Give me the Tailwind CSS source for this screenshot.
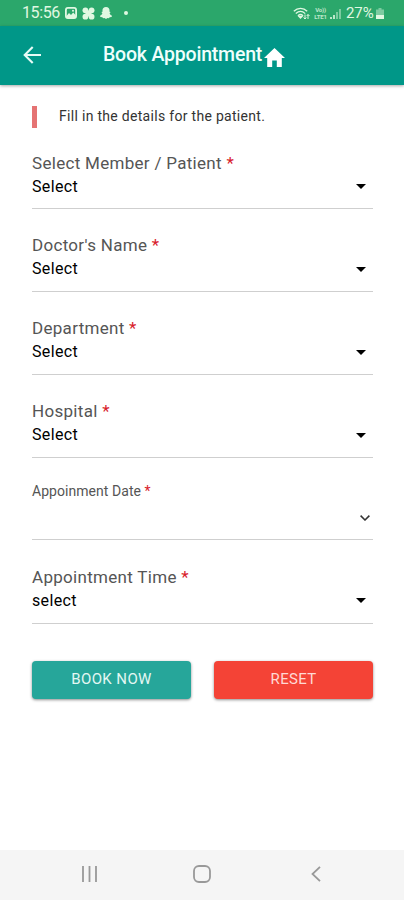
<!DOCTYPE html>
<html lang="en">
  <head>
    <meta charset="UTF-8" />
    <meta name="viewport" content="width=device-width, initial-scale=1.0" />
    <title>Book Appointment</title>
    <script src="https://cdn.jsdelivr.net/npm/@tailwindcss/browser@4"></script>
  </head>
  <body class="bg-white font-[Roboto,sans-serif] text-black">
    <div class="flex flex-col w-[404px] h-[900px] overflow-hidden">
      <!-- Status bar -->
      <div class="h-[26px] shrink-0 bg-[#2ba76b] text-[#e0f8e2] flex items-center justify-between pl-[22px] pr-[20px]">
        <div class="flex items-center">
          <span class="w-[43px] text-[16px] leading-none whitespace-nowrap tracking-[-0.4px]">15:56</span>
          <svg class="w-[12px] h-[12px]" viewBox="0 0 12 12">
            <rect x="0.9" y="0.9" width="10.2" height="10.2" rx="2" fill="none" stroke="currentColor" stroke-width="1.8" />
            <path d="M1 9.5 4 6l2 2 2.2-2.6L11 8.5V11H1z" fill="currentColor" />
            <circle cx="8" cy="3.7" r="1" fill="currentColor" />
          </svg>
          <svg class="w-[13px] h-[13px] ml-[5px]" viewBox="0 0 13 13" fill="currentColor">
            <circle cx="3.4" cy="3.3" r="2.9" />
            <circle cx="9.6" cy="3.3" r="2.9" />
            <circle cx="3.4" cy="9.7" r="2.9" />
            <circle cx="9.6" cy="9.7" r="2.9" />
            <rect x="3.5" y="3.5" width="6" height="6" />
          </svg>
          <svg class="w-[12px] h-[12px] ml-[5px]" viewBox="0 0 12 12" fill="currentColor">
            <path d="M6 0C3.7 0 2.5 1.5 2.5 3.1v1.7l-1.200.3 1.100 1.200C2 7.600 1.300 8.300 0 8.800l.4 1.200 2 .3.6.9 1.500-.1L6 12l1.500-.9 1.500.1.6-.9 2-.3.4-1.200c-1.300-.5-2-1.200-2.400-2.500l1.100-1.200-1.200-.3V3.100C9.500 1.500 8.300 0 6 0z" />
          </svg>
          <span class="w-[4px] h-[4px] ml-[12px] rounded-full bg-current"></span>
        </div>
        <div class="flex items-center">
          <svg class="w-[17px] h-[13px]" viewBox="0 0 17 13" fill="none" stroke="currentColor" stroke-width="1.3">
            <path d="M.8 4.200c4-3.800 9.500-3.800 13.400 0M2.800 6.600c3-2.800 6.500-2.800 9.400 0M5 8.800c1.500-1.500 3.500-1.500 5 0" />
            <path d="M6 9.500h3L7.500 11z" />
            <path d="M12 7.500v4.500M10.500 10.500 12 12l1.300-1.500M15 12V7.500M13.700 9 15 7.500 16.500 9" stroke-width="1" />
          </svg>
          <span class="ml-[3px] w-[15px] flex flex-col items-center text-[6px] leading-[7px] font-bold opacity-80 tracking-[-0.2px]">
            <span>Vo))</span>
            <span>LTE1</span>
          </span>
          <svg class="w-[11px] h-[11px] ml-[2px]" viewBox="0 0 11 11" fill="currentColor">
            <path d="M0 9h2v2H0zM3 7h2v4H3z" opacity=".8" />
            <path d="M6 4h2v7H6zM9 1h2v10H9z" opacity=".45" />
          </svg>
          <span class="ml-[5px] w-[29px] text-[15px] leading-none whitespace-nowrap tracking-[-0.1px]">27%</span>
          <svg class="w-[8px] h-[11px] ml-px mt-px" viewBox="0 0 8 11" fill="currentColor">
            <path d="M2.500 0h3v1.500H8V11H0V1.500h2.500z" opacity=".45" />
            <path d="M0 7h8v4H0z" />
          </svg>
        </div>
      </div>

      <!-- App bar -->
      <header class="relative z-10 h-[59px] shrink-0 bg-[#009788] text-white flex items-center shadow-[0_1px_3px_rgba(0,0,0,0.35)]">
        <svg class="w-[18px] h-[18px] ml-[23px] mb-px" viewBox="0 0 18 18" fill="none" stroke="#e6fbf6" stroke-width="2.1">
          <path d="M9.700 1 1.700 9l8 8M1.700 9H18" />
        </svg>
        <h1 class="ml-[62px] mb-[2px] w-[160px] text-[19.5px] leading-none font-medium whitespace-nowrap tracking-[-0.2px] text-[#effffc]">Book Appointment</h1>
        <svg class="w-[21px] h-[19px] ml-px mt-[3px]" viewBox="0 0 21 19" fill="currentColor">
          <path d="M10.500 0 0 10h3.200v9h5v-6.500h4.600V19h5v-9H21z" />
        </svg>
      </header>

      <!-- Form -->
      <main class="grow px-[32px] pt-[21px]">
        <div class="h-[22px] border-l-[5px] border-[#e57373] pl-[22px] text-[14px] leading-[21px] text-[#333] whitespace-nowrap">
          <p class="tracking-[0.3px]">Fill in the details for the patient.</p>
        </div>

        <form class="mt-[-2px] w-[341px]">
          <div class="h-[83px] border-b border-[#cfcfcf] pt-[25px]">
            <label class="block text-[17px] leading-[24px] tracking-[0.3px] text-[#555]">Select Member / Patient <span class="text-[#d8202a]">*</span></label>
            <div class="flex items-center justify-between pr-[7px] text-[16px] leading-[23px] tracking-[0.35px]">
              Select
              <svg class="w-[10px] h-[5px]" viewBox="0 0 10 5"><path d="M0 0h10L5 5z" /></svg>
            </div>
          </div>
          <div class="h-[83px] border-b border-[#cfcfcf] pt-[24px]">
            <label class="block text-[17px] leading-[24px] tracking-[0.3px] text-[#555]">Doctor's Name <span class="text-[#d8202a]">*</span></label>
            <div class="flex items-center justify-between pr-[7px] text-[16px] leading-[24px] tracking-[0.35px]">
              Select
              <svg class="w-[10px] h-[5px]" viewBox="0 0 10 5"><path d="M0 0h10L5 5z" /></svg>
            </div>
          </div>
          <div class="h-[83px] border-b border-[#cfcfcf] pt-[24px]">
            <label class="block text-[17px] leading-[24px] tracking-[0.3px] text-[#555]">Department <span class="text-[#d8202a]">*</span></label>
            <div class="flex items-center justify-between pr-[7px] text-[16px] leading-[24px] tracking-[0.35px]">
              Select
              <svg class="w-[10px] h-[5px]" viewBox="0 0 10 5"><path d="M0 0h10L5 5z" /></svg>
            </div>
          </div>
          <div class="h-[83px] border-b border-[#cfcfcf] pt-[24px]">
            <label class="block text-[17px] leading-[24px] tracking-[0.3px] text-[#555]">Hospital <span class="text-[#d8202a]">*</span></label>
            <div class="flex items-center justify-between pr-[7px] text-[16px] leading-[24px] tracking-[0.35px]">
              Select
              <svg class="w-[10px] h-[5px]" viewBox="0 0 10 5"><path d="M0 0h10L5 5z" /></svg>
            </div>
          </div>
          <div class="h-[82px] border-b border-[#cfcfcf] pt-[23px]">
            <label class="block text-[14px] leading-[20px] tracking-[0.05px] text-[#555]">Appoinment Date <span class="text-[#d8202a]">*</span></label>
            <div class="flex justify-end pr-[3px] pt-[14px]">
              <svg class="w-[10px] h-[6px]" viewBox="0 0 10 6" fill="none" stroke="#333" stroke-width="1.5"><path d="M.6.6 5 5 9.400.6" /></svg>
            </div>
          </div>
          <div class="h-[84px] border-b border-[#cfcfcf] pt-[25px]">
            <label class="block text-[17px] leading-[24px] tracking-[0.3px] text-[#555]">Appointment Time <span class="text-[#d8202a]">*</span></label>
            <div class="flex items-center justify-between pr-[7px] text-[16px] leading-[23px] tracking-[0.35px]">
              select
              <svg class="w-[10px] h-[5px]" viewBox="0 0 10 5"><path d="M0 0h10L5 5z" /></svg>
            </div>
          </div>

          <div class="mt-[37px] flex justify-between">
            <button type="button" class="w-[159px] h-[38px] pb-[2px] rounded-[4px] bg-[#26a69a] text-[#e3f7f3] text-[15px] tracking-[0.4px] shadow-[0_1px_3px_rgba(0,0,0,0.45)]">BOOK NOW</button>
            <button type="button" class="w-[159px] h-[38px] pb-[2px] rounded-[4px] bg-[#f44336] text-[#ffd9d4] text-[15px] tracking-[0.3px] shadow-[0_1px_3px_rgba(0,0,0,0.45)]">RESET</button>
          </div>
        </form>
      </main>

      <!-- System navigation -->
      <nav class="h-[50px] shrink-0 bg-[#f5f5f5] flex items-center pl-[81px] pb-[2px]">
        <svg class="w-[17px] h-[16px]" viewBox="0 0 17 16" stroke="#999" stroke-width="1.8"><path d="M2 0v16M8.500 0v16M15 0v16" /></svg>
        <svg class="w-[18px] h-[18px] ml-[95px]" viewBox="0 0 18 18" fill="none" stroke="#999" stroke-width="1.8"><rect x="1" y="1" width="16" height="16" rx="5" /></svg>
        <svg class="w-[10px] h-[16px] ml-[100px]" viewBox="0 0 10 16" fill="none" stroke="#999" stroke-width="1.800"><path d="M9 .8 1.500 8 9 15.200" /></svg>
      </nav>
    </div>
  </body>
</html>
